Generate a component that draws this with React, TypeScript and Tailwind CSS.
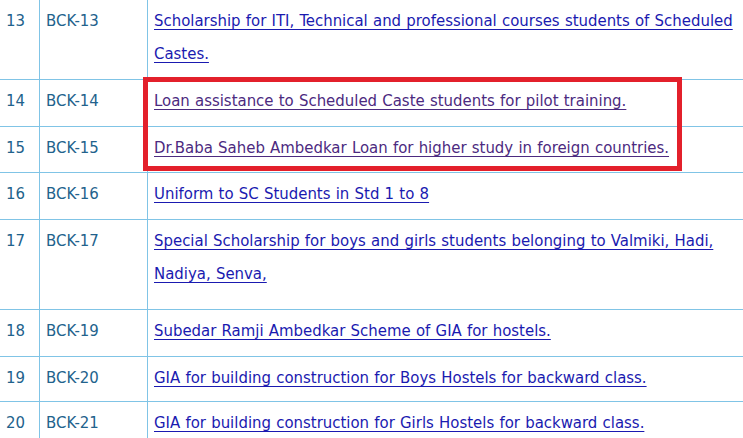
import type { ReactNode } from 'react';

type Row = { no: string; code: string; lines: string[]; h: string; visited?: boolean };

const rows: Row[] = [
  {
    no: '13',
    code: 'BCK-13',
    lines: ['Scholarship for ITI, Technical and professional courses students of Scheduled', 'Castes.'],
    h: 'h-[80px]',
  },
  { no: '14', code: 'BCK-14', lines: ['Loan assistance to Scheduled Caste students for pilot training.'], h: 'h-[47px]', visited: true },
  { no: '15', code: 'BCK-15', lines: ['Dr.Baba Saheb Ambedkar Loan for higher study in foreign countries.'], h: 'h-[46px]', visited: true },
  { no: '16', code: 'BCK-16', lines: ['Uniform to SC Students in Std 1 to 8'], h: 'h-[47px]' },
  {
    no: '17',
    code: 'BCK-17',
    lines: ['Special Scholarship for boys and girls students belonging to Valmiki, Hadi,', 'Nadiya, Senva,'],
    h: 'h-[90px]',
  },
  { no: '18', code: 'BCK-19', lines: ['Subedar Ramji Ambedkar Scheme of GIA for hostels.'], h: 'h-[47px]' },
  { no: '19', code: 'BCK-20', lines: ['GIA for building construction for Boys Hostels for backward class.'], h: 'h-[45px]' },
  { no: '20', code: 'BCK-21', lines: ['GIA for building construction for Girls Hostels for backward class.'], h: 'h-[60px]' },
];

function Cell({ children, className = '' }: { children: ReactNode; className?: string }) {
  return <div className={`border-r border-[#80c4e6] pt-[4px] pl-[6px] ${className}`}>{children}</div>;
}

export default function App() {
  return (
    <div
      className="relative h-[438px] w-[743px] overflow-hidden bg-white text-[16.6px] leading-[33px] text-[#22628c] [word-spacing:0.5px]"
      style={{ fontFamily: '"DejaVu Sans Condensed", "DejaVu Sans", sans-serif' }}
    >
      {rows.map((r) => (
        <div key={r.no} className={`grid grid-cols-[40px_108px_640px] border-b border-[#80c4e6] ${r.h}`}>
          <Cell>{r.no}</Cell>
          <Cell>{r.code}</Cell>
          <Cell>
            {r.lines.map((l) => (
              <div key={l} className="whitespace-nowrap">
                <a
                  href="#"
                  className={`underline underline-offset-[3px] ${r.visited ? 'text-[#4c2a80]' : 'text-[#1a1ab0]'}`}
                >
                  {l}
                </a>
              </div>
            ))}
          </Cell>
        </div>
      ))}
      <div className="pointer-events-none absolute left-[143px] top-[77px] h-[94px] w-[539px] border-[5px] border-[#e3202b]" />
    </div>
  );
}
